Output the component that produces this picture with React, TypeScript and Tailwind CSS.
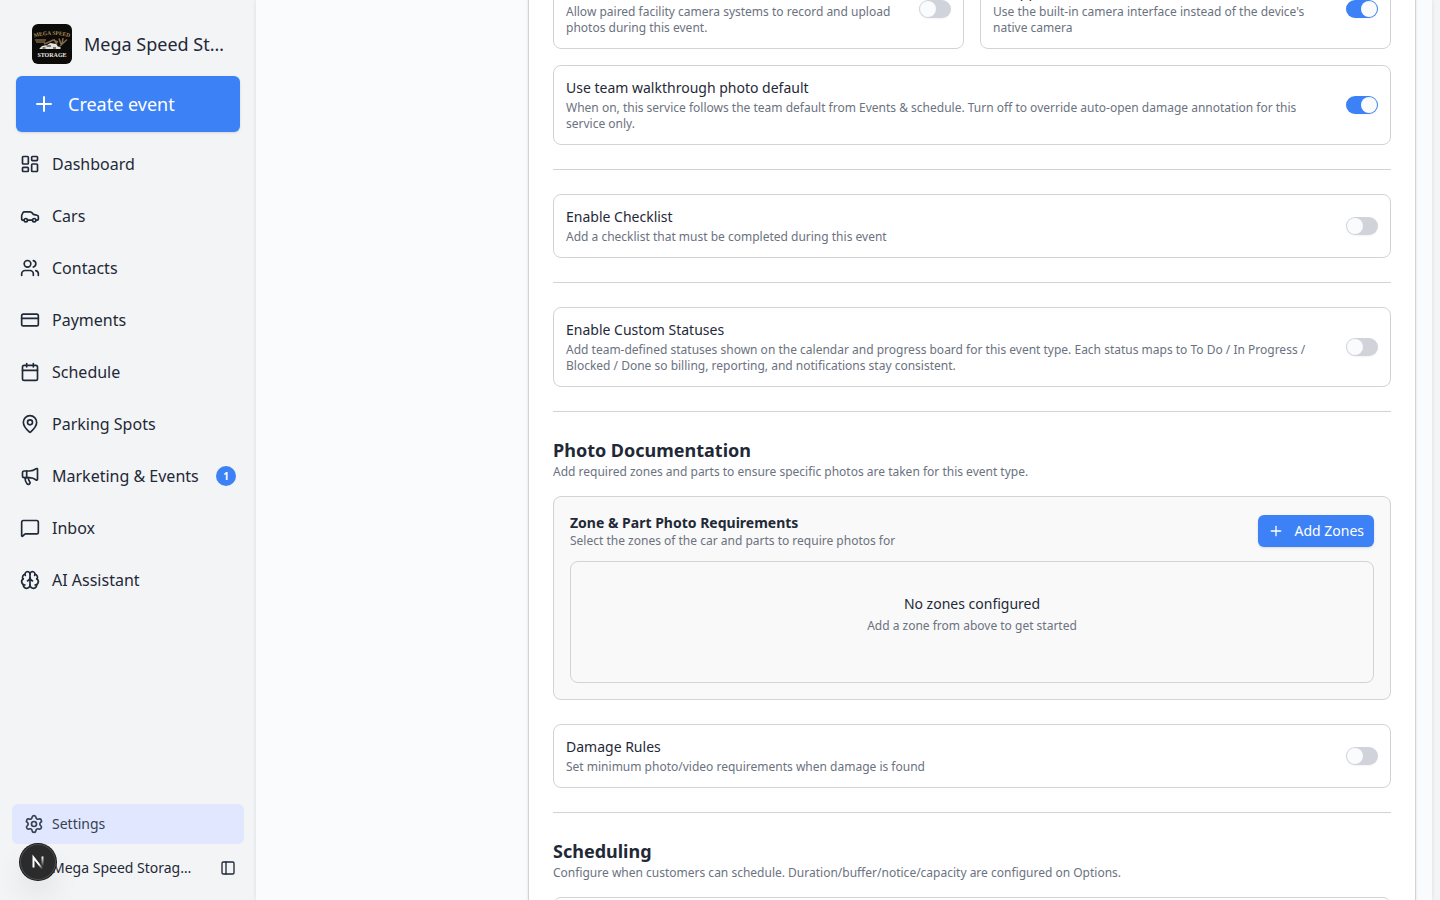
import React, { useState } from 'react';
import {
  Brain,
  Calendar,
  Car,
  CreditCard,
  LayoutDashboard,
  MapPin,
  Megaphone,
  MessageSquare,
  PanelLeft,
  Plus,
  Settings,
  Users,
  type LucideIcon
} from 'lucide-react';

interface NavItem {
  label: string;
  icon: LucideIcon;
  badge?: number;
}

const navItems: NavItem[] = [
  { label: 'Dashboard', icon: LayoutDashboard },
  { label: 'Cars', icon: Car },
  { label: 'Contacts', icon: Users },
  { label: 'Payments', icon: CreditCard },
  { label: 'Schedule', icon: Calendar },
  { label: 'Parking Spots', icon: MapPin },
  { label: 'Marketing & Events', icon: Megaphone, badge: 1 },
  { label: 'Inbox', icon: MessageSquare },
  { label: 'AI Assistant', icon: Brain }
];

const TeamLogo: React.FC = () => (
  <svg viewBox="0 0 80 80" className="size-10 shrink-0 rounded-md" role="img" aria-label="Team logo">
    <rect width="80" height="80" fill="#0b0b09" />
    <defs>
      <path id="logo-arc" d="M4 27Q40 16 76 27" />
    </defs>
    <text fontFamily="Liberation Serif, serif" fontSize="11" fontWeight="bold" fill="#b08d57" textAnchor="middle">
      <textPath href="#logo-arc" startOffset="50%">MEGA SPEED</textPath>
    </text>
    <path d="M6 32h22M8 36h18" stroke="#7a6340" strokeWidth="3" />
    <path d="M24 40l10-4 8-4 10 4M56 44l14-13M54 29l4 11M62 28l-2 12M44 31l6 10" stroke="#84694a" strokeWidth="3" fill="none" />
    <path d="M15 49l5-5 10-2 7-4 11 2 4 5 5 1v4H15z" fill="#e5e2d9" />
    <path d="M21 48h6M42 48h6M29 44h9" stroke="#111" strokeWidth="2" />
    <text x="40" y="65" textAnchor="middle" fontFamily="Liberation Serif, serif" fontSize="12" fontWeight="bold" fill="#ebe9e2">
      STORAGE
    </text>
  </svg>
);

const Sidebar: React.FC = () => (
  <aside className="flex w-64 shrink-0 flex-col bg-[#f3f4f6]">
    <div className="flex items-center gap-3 px-8 pt-6 pb-3">
      <TeamLogo />
      <span className="truncate text-lg">Mega Speed Storage</span>
    </div>
    <button type="button" className="mx-4 flex h-14 shrink-0 items-center gap-3 rounded-md bg-[#3c82f6] px-4 text-lg text-white shadow-sm">
      <Plus className="size-6" />
      Create event
    </button>
    <nav className="flex flex-col gap-2 px-2 pt-2.5">
      {navItems.map(({ label, icon: Icon, badge }) => (
        <a key={label} href="#" className="flex h-11 items-center gap-3 rounded-md px-3">
          <Icon className="size-5 shrink-0" />
          <span className="whitespace-nowrap">{label}</span>
          {badge && (
            <span className="ml-auto flex size-5 shrink-0 items-center justify-center rounded-full bg-[#3c82f6] text-[10px] font-bold text-white">
              {badge}
            </span>
          )}
        </a>
      ))}
    </nav>
    <div className="mt-auto px-3 pb-3 text-sm">
      <a href="#" className="flex h-10 items-center gap-2 rounded-md bg-[#e0e7ff] px-3 text-[#374151]">
        <Settings className="size-5" />
        Settings
      </a>
      <div className="mt-1 flex h-10 items-center justify-between pr-2 pl-10">
        <span className="w-36 truncate">Mega Speed Storage Team</span>
        <button type="button" aria-label="Toggle sidebar">
          <PanelLeft className="size-4" />
        </button>
      </div>
    </div>
  </aside>
);

interface SettingCardProps {
  id: string;
  title: string;
  description: string;
  defaultOn?: boolean;
}

const SettingCard: React.FC<SettingCardProps> = ({ id, title, description, defaultOn = false }) => {
  const [on, setOn] = useState(defaultOn);

  return (
    <div className="flex items-center justify-between gap-7 rounded-lg border border-[#d2d3d5] p-3">
      <div className="space-y-0.5">
        <label htmlFor={id} className="block text-sm">{title}</label>
        <p className="text-xs text-[#6b7280]">{description}</p>
      </div>
      <input
        id={id}
        type="checkbox"
        role="switch"
        checked={on}
        onChange={(e) => setOn(e.target.checked)}
        className="flex h-[18px] w-8 shrink-0 appearance-none items-center rounded-full bg-[#d1d3da] px-px shadow-xs before:size-4 before:rounded-full before:bg-[#fafbfd] checked:justify-end checked:bg-[#3c82f6]"
      />
    </div>
  );
};

const SectionHeading: React.FC<{ title: string; description: string }> = ({ title, description }) => (
  <div>
    <h2 className="text-lg/7 font-bold">{title}</h2>
    <p className="text-xs text-[#6b7280]">{description}</p>
  </div>
);

const Divider: React.FC = () => <hr className="border-[#d2d3d5]" />;

const App: React.FC = () => {
  return (
    <div className="flex h-screen overflow-hidden bg-[#f3f4f6] pr-2 font-['Noto_Sans',sans-serif] text-[#1f2937]">
      <Sidebar />

      <main className="grid min-w-0 flex-1 grid-cols-[256px_minmax(0,1fr)] gap-4 overflow-hidden bg-[#fafbfd] pr-4 shadow-[0_0_4px_rgba(0,0,0,0.1)]">
        <section className="col-start-2 -mt-14 space-y-6 self-start border border-[#d2d3d5] bg-white p-6 shadow-sm">
          <div className="space-y-4">
            <div className="grid grid-cols-2 gap-4">
              <SettingCard
                id="camera-recording"
                title="Camera Feeds"
                description="Allow paired facility camera systems to record and upload photos during this event."
              />
              <SettingCard
                id="in-app-camera"
                title="In-App Camera"
                description="Use the built-in camera interface instead of the device's native camera"
                defaultOn
              />
            </div>
            <SettingCard
              id="walkthrough-default"
              title="Use team walkthrough photo default"
              description="When on, this service follows the team default from Events & schedule. Turn off to override auto-open damage annotation for this service only."
              defaultOn
            />
          </div>

          <Divider />
          <SettingCard
            id="checklist"
            title="Enable Checklist"
            description="Add a checklist that must be completed during this event"
          />
          <Divider />
          <SettingCard
            id="custom-statuses"
            title="Enable Custom Statuses"
            description="Add team-defined statuses shown on the calendar and progress board for this event type. Each status maps to To Do / In Progress / Blocked / Done so billing, reporting, and notifications stay consistent."
          />
          <Divider />

          <div className="space-y-4">
            <SectionHeading
              title="Photo Documentation"
              description="Add required zones and parts to ensure specific photos are taken for this event type."
            />
            <div className="space-y-3 rounded-lg border border-[#d2d3d5] bg-[#f9f9f9] p-4">
              <div className="flex items-center justify-between">
                <div>
                  <h3 className="text-sm font-bold">Zone &amp; Part Photo Requirements</h3>
                  <p className="text-xs text-[#6b7280]">Select the zones of the car and parts to require photos for</p>
                </div>
                <button type="button" className="flex h-8 items-center gap-2.5 rounded-md bg-[#3c82f6] px-2.5 text-sm text-white shadow-sm">
                  <Plus className="size-4" />
                  Add Zones
                </button>
              </div>
              <div className="space-y-1 rounded-lg border border-[#d2d3d5] pt-8 pb-12 text-center">
                <p className="text-sm">No zones configured</p>
                <p className="text-xs text-[#6b7280]">Add a zone from above to get started</p>
              </div>
            </div>
          </div>

          <SettingCard
            id="damage-rules"
            title="Damage Rules"
            description="Set minimum photo/video requirements when damage is found"
          />
          <Divider />

          <div className="space-y-4">
            <SectionHeading
              title="Scheduling"
              description="Configure when customers can schedule. Duration/buffer/notice/capacity are configured on Options."
            />
            <SettingCard
              id="customer-scheduling"
              title="Customer Scheduling"
              description="Let customers schedule this event"
            />
          </div>
        </section>
      </main>

      {/* dev tools badge, floats over the sidebar footer */}
      <button
        type="button"
        aria-label="Open dev tools"
        className="fixed bottom-5 left-5 flex size-9 items-center justify-center rounded-full bg-[#2b2b2b] shadow-[0_0_0_1px_#171717,inset_0_0_0_1px_#4b4b4b,0_16px_32px_-8px_rgba(0,0,0,0.24)]"
      >
        <svg viewBox="0 0 32 32" className="size-4" fill="none" aria-hidden="true">
          <defs>
            <linearGradient id="n-left" x1="18" y1="20" x2="26" y2="29" gradientUnits="userSpaceOnUse">
              <stop stopColor="#fff" />
              <stop offset="1" stopColor="#fff" stopOpacity="0" />
            </linearGradient>
            <linearGradient id="n-right" x1="25" y1="5" x2="25" y2="25" gradientUnits="userSpaceOnUse">
              <stop stopColor="#fff" />
              <stop offset="1" stopColor="#fff" stopOpacity="0" />
            </linearGradient>
          </defs>
          <path d="M7 27V7L25 30" stroke="url(#n-left)" strokeWidth="4" />
          <path d="M25 5v20" stroke="url(#n-right)" strokeWidth="4" />
        </svg>
      </button>
    </div>
  );
};

export default App;
